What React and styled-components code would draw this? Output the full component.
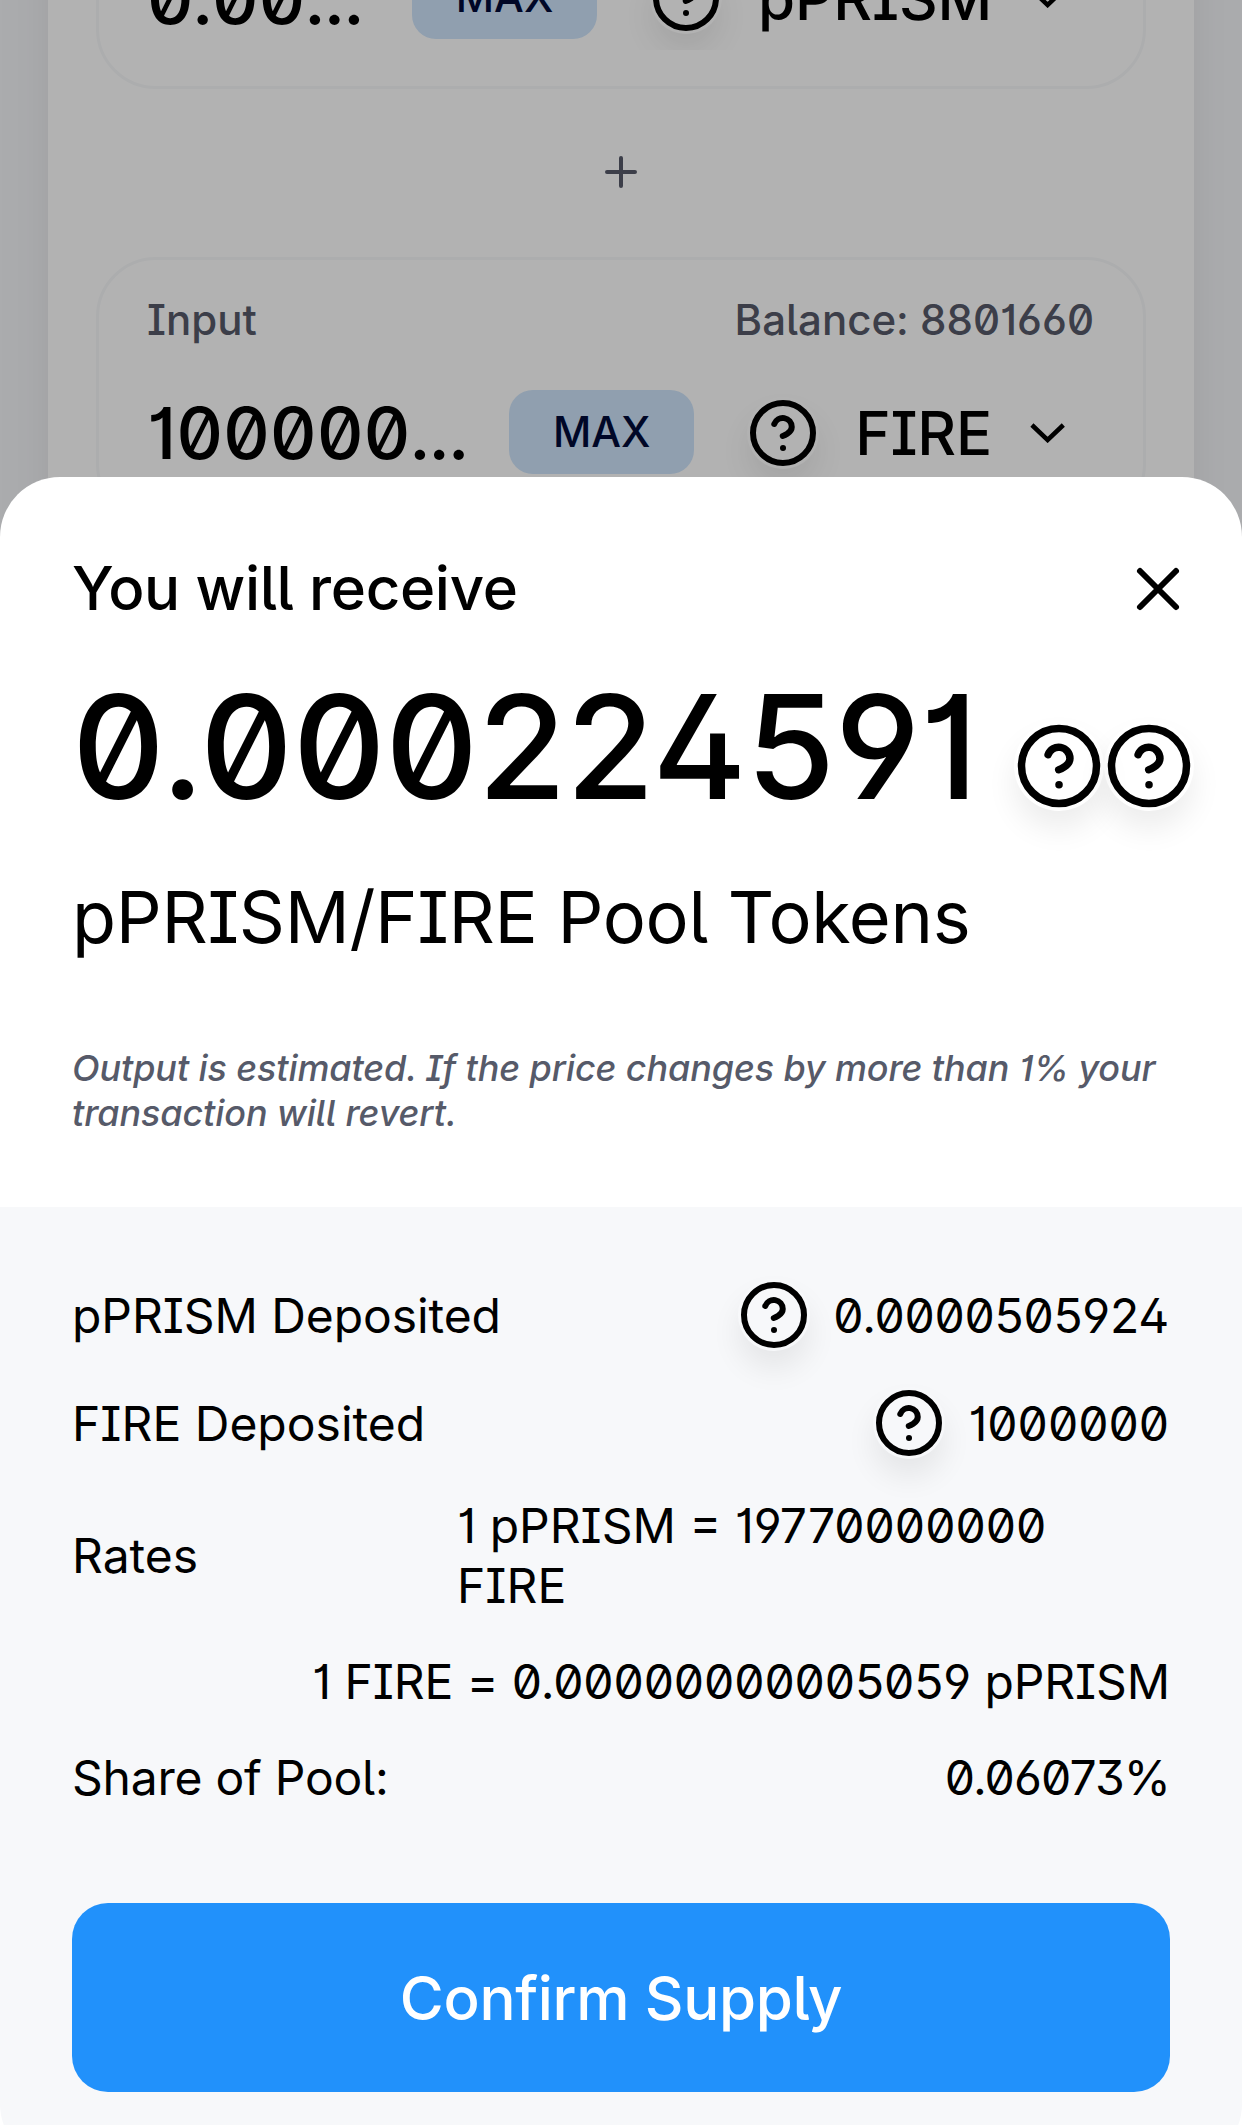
import React from "react";
import styled, { createGlobalStyle } from "styled-components";

const GlobalStyle = createGlobalStyle`
  *, *::before, *::after { box-sizing: border-box; }
  body { margin: 0; background: #f7f8fa; }
  button { border: 0; margin: 0; padding: 0; background: none; font: inherit; color: inherit; }
`;

const Page = styled.div`
  position: relative;
  width: 1242px;
  height: 2125px;
  padding: 0 48px;
  overflow: hidden;
  background: #f5f6f9;
  color: #000;
  font-family: Inter, "Liberation Sans", sans-serif;
  font-feature-settings: "ss01" on, "ss02" on, "cv01" on, "cv03" on;
  font-optical-sizing: none;
  font-weight: 500;
`;

const Card = styled.main`
  display: flex;
  flex-direction: column;
  align-items: center;
  margin-top: -226px;
  padding: 48px 48px 600px;
  border-radius: 90px;
  background: #fff;
  box-shadow: 0 0 3px rgba(0, 0, 0, 0.01), 0 12px 24px rgba(0, 0, 0, 0.04),
    0 48px 72px rgba(0, 0, 0, 0.04), 0 72px 96px rgba(0, 0, 0, 0.01);
`;

const Panel = styled.section`
  width: 1050px;
  height: 267px;
  padding: 36px 48px 0;
  border: 3px solid #f7f8fa;
  border-radius: 60px;
`;

const LabelRow = styled.div`
  display: flex;
  justify-content: space-between;
  padding-right: 1px;
  font-size: 42px;
  line-height: 48px;
  color: #565a69;
`;

const InputRow = styled.div`
  display: flex;
  align-items: center;
  height: 105px;
  margin-top: 36px;
  padding-right: 30px;
`;

const Amount = styled.span`
  flex: 1;
  font-size: 72px;
  line-height: 84px;
  letter-spacing: 0.3px;
  white-space: nowrap;
`;

const Dots = styled.span`
  margin-left: -1.5px;
  letter-spacing: -2.4px;
`;

const MaxButton = styled.button`
  width: 185px;
  height: 84px;
  margin-bottom: 2px;
  border-radius: 24px;
  background: #cee4fb;
  color: #000b38;
  font-size: 42px;
  line-height: 84px;
`;

const TokenButton = styled.button`
  display: flex;
  align-items: center;
  height: 105px;
  margin-left: 23px;
  padding-left: 30px;
  overflow: hidden;
`;

const TokenName = styled.span`
  margin: 0 37px 0 36px;
  font-size: 60px;
  line-height: 72px;
  letter-spacing: -0.2px;
`;

const PlusWrap = styled.div`
  display: flex;
  height: 48px;
  margin: 59px 0 61px;
  color: #565a69;
`;

const Svg = styled.svg`
  display: block;
  flex: none;
  fill: none;
  stroke: currentColor;
  stroke-linecap: round;
  stroke-linejoin: round;
`;

const LogoSvg = styled(Svg)`
  border-radius: 50%;
  box-shadow: 0 18px 30px rgba(0, 0, 0, 0.075);
`;

const Overlay = styled.div`
  position: absolute;
  inset: 0;
  background: rgba(0, 0, 0, 0.3);
`;

const Sheet = styled.section`
  position: absolute;
  top: 477px;
  bottom: 0;
  left: 0;
  width: 1242px;
  border-radius: 60px 60px 0 0;
  background: #fff;
  overflow: hidden;
`;

const Summary = styled.div`
  height: 730px;
  padding: 75px 48px 0 72px;
`;

const Header = styled.header`
  display: flex;
  align-items: center;
  justify-content: space-between;
  height: 74px;
`;

const Title = styled.h1`
  margin: 0 0 2px;
  font-size: 60px;
  font-weight: 500;
  line-height: 72px;
  letter-spacing: -0.34px;
`;

const ReceiveRow = styled.div`
  display: flex;
  align-items: flex-end;
  justify-content: space-between;
  height: 127px;
  margin-top: 58px;
`;

const Received = styled.div`
  font-size: 144px;
  line-height: 126px;
  letter-spacing: -0.4px;
  padding-bottom: 1px;
`;

const LogoPair = styled.div`
  display: flex;
`;

const PoolName = styled.div`
  margin-top: 61px;
  font-size: 72px;
  font-weight: 400;
  line-height: 90px;
  letter-spacing: -0.33px;
`;

const Note = styled.p`
  margin: 84px 0 0;
  font-size: 36px;
  font-style: italic;
  line-height: 45px;
  letter-spacing: -0.12px;
  color: #565a69;
`;

const Details = styled.div`
  display: flex;
  flex-direction: column;
  gap: 36px;
  padding: 72px;
  border-radius: 0 0 60px 60px;
  background: #f7f8fa;
  font-size: 48px;
  font-weight: 400;
  line-height: 60px;
`;

const Row = styled.div`
  display: flex;
  align-items: center;
  justify-content: ${(p) => (p.$end ? "flex-end" : "space-between")};
`;

const Text = styled.span`
  margin: 1px 0 -1px;
  letter-spacing: ${(p) => p.$track || 0}px;
`;

const Value = styled.div`
  display: flex;
  align-items: center;
  gap: 23px;
  padding-right: 1px;
`;

const Rate = styled(Text)`
  width: 713px;
  padding-right: 40px;
`;

const ConfirmButton = styled.button`
  height: 189px;
  margin-top: 60px;
  border-radius: 36px;
  background: #2191fb;
  color: #fff;
  font-size: 60px;
  font-weight: 500;
  letter-spacing: -0.34px;
`;

function TokenLogo({ size = 72 }) {
  return (
    <LogoSvg width={size} height={size} viewBox="0 0 24 24" strokeWidth="2">
      <circle cx="12" cy="12" r="10" />
      <path d="M9.09 9a3 3 0 0 1 5.83 1c0 2-3 3-3 3" />
      <path d="M12 17h.01" />
    </LogoSvg>
  );
}

function Chevron() {
  return (
    <svg width="36" height="21" viewBox="0 0 12 7" fill="none" stroke="#000" strokeWidth="1.5">
      <path d="M0.97168 1L6.20532 6L11.439 1" />
    </svg>
  );
}

function CurrencyPanel({ balance, amount, token }) {
  return (
    <Panel>
      <LabelRow>
        <span>Input</span>
        <span>Balance: {balance}</span>
      </LabelRow>
      <InputRow>
        <Amount>
          {amount}
          <Dots>...</Dots>
        </Amount>
        <MaxButton>MAX</MaxButton>
        <TokenButton>
          <TokenLogo />
          <TokenName>{token}</TokenName>
          <Chevron />
        </TokenButton>
      </InputRow>
    </Panel>
  );
}

export default function App() {
  return (
    <>
      <GlobalStyle />
      <Page>
        <Card>
          <CurrencyPanel balance="0" amount="0.00" token="pPRISM" />
          <PlusWrap>
            <Svg width="48" height="48" viewBox="0 0 24 24" strokeWidth="2">
              <path d="M12 5v14M5 12h14" />
            </Svg>
          </PlusWrap>
          <CurrencyPanel balance="8801660" amount="100000" token="FIRE" />
        </Card>
        <Overlay />
        <Sheet>
          <Summary>
            <Header>
              <Title>You will receive</Title>
              <Svg width="72" height="72" viewBox="0 0 24 24" strokeWidth="2">
                <path d="M18 6L6 18M6 6l12 12" />
              </Svg>
            </Header>
            <ReceiveRow>
              <Received>0.000224591</Received>
              <LogoPair>
                <TokenLogo size={90} />
                <TokenLogo size={90} />
              </LogoPair>
            </ReceiveRow>
            <PoolName>pPRISM/FIRE Pool Tokens</PoolName>
            <Note>
              Output is estimated. If the price changes by more than 1% your transaction will
              revert.
            </Note>
          </Summary>
          <Details>
            <Row>
              <Text $track={-0.08}>pPRISM Deposited</Text>
              <Value>
                <TokenLogo />
                <Text $track={-0.27}>0.0000505924</Text>
              </Value>
            </Row>
            <Row>
              <Text>FIRE Deposited</Text>
              <Value>
                <TokenLogo />
                <Text>1000000</Text>
              </Value>
            </Row>
            <Row>
              <Text>Rates</Text>
              <Rate>1 pPRISM = 19770000000 FIRE</Rate>
            </Row>
            <Row $end>
              <Text $track={-0.11}>1 FIRE = 0.00000000005059 pPRISM</Text>
            </Row>
            <Row>
              <Text $track={-0.24}>Share of Pool:</Text>
              <Text $track={-0.9}>0.06073%</Text>
            </Row>
            <ConfirmButton>Confirm Supply</ConfirmButton>
          </Details>
        </Sheet>
      </Page>
    </>
  );
}
